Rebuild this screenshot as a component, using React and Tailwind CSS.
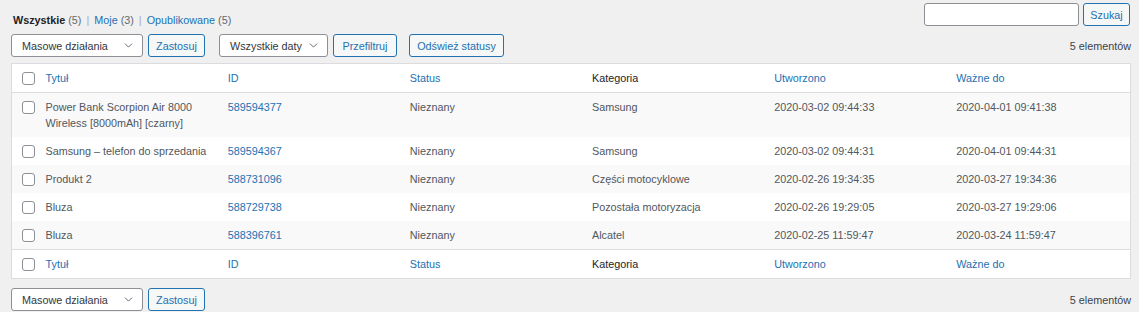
import { ChevronDown } from 'lucide-react'

const rows = [
  {
    title: 'Power Bank Scorpion Air 8000 Wireless [8000mAh] [czarny]',
    id: '589594377',
    status: 'Nieznany',
    cat: 'Samsung',
    created: '2020-03-02 09:44:33',
    valid: '2020-04-01 09:41:38',
  },
  {
    title: 'Samsung – telefon do sprzedania',
    id: '589594367',
    status: 'Nieznany',
    cat: 'Samsung',
    created: '2020-03-02 09:44:31',
    valid: '2020-04-01 09:44:31',
  },
  {
    title: 'Produkt 2',
    id: '588731096',
    status: 'Nieznany',
    cat: 'Części motocyklowe',
    created: '2020-02-26 19:34:35',
    valid: '2020-03-27 19:34:36',
  },
  {
    title: 'Bluza',
    id: '588729738',
    status: 'Nieznany',
    cat: 'Pozostała motoryzacja',
    created: '2020-02-26 19:29:05',
    valid: '2020-03-27 19:29:06',
  },
  {
    title: 'Bluza',
    id: '588396761',
    status: 'Nieznany',
    cat: 'Alcatel',
    created: '2020-02-25 11:59:47',
    valid: '2020-03-24 11:59:47',
  },
]

const Checkbox = () => (
  <span className="block w-[13px] h-[13px] ml-[2px] rounded-[3px] border border-[#8c8f94] bg-white" />
)

const Select = ({ label, width }) => (
  <div
    className={`flex items-center justify-between h-[23px] ${width} pl-[10px] pr-[7px] rounded-[3px] border border-[#8c8f94] bg-white text-[#32373c] whitespace-nowrap`}>
    <span>{label}</span>
    <ChevronDown size={13} strokeWidth={1.6} className="text-[#50575e]" />
  </div>
)

const Button = ({ children, className = '' }) => (
  <button
    className={`h-[23px] px-0 whitespace-nowrap rounded-[3px] border border-[#2271b1] bg-[#f6f7f7] text-[#2271b1] ${className}`}>
    {children}
  </button>
)

const HeadRow = () => (
  <tr className="h-[29px]">
    <td className="pl-[8px] align-middle">
      <Checkbox />
    </td>
    <th className="px-[8px] text-left font-normal text-[#2271b1]">Tytuł</th>
    <th className="px-[8px] text-left font-normal text-[#2271b1]">ID</th>
    <th className="px-[8px] text-left font-normal text-[#2271b1]">Status</th>
    <th className="px-[8px] text-left font-normal text-[#1d2327]">Kategoria</th>
    <th className="px-[8px] text-left font-normal text-[#2271b1]">Utworzono</th>
    <th className="px-[8px] text-left font-normal text-[#2271b1]">Ważne do</th>
  </tr>
)

const Nav = ({ top }) => (
  <div className="flex items-center h-[23px]">
    <Select label="Masowe działania" width="w-[132px]" />
    <Button className="ml-[5px] w-[57px]">Zastosuj</Button>
    {top && (
      <>
        <div className="ml-[14px]">
          <Select label="Wszystkie daty" width="w-[109px]" />
        </div>
        <Button className="ml-[5px] w-[64px]">Przefiltruj</Button>
        <Button className="ml-[12px] w-[95px]">Odśwież statusy</Button>
      </>
    )}
    <div className="ml-auto text-[#3c434a]">5 elementów</div>
  </div>
)

export default function App() {
  return (
    <div
      className="w-[1139px] h-[312px] bg-[#f0f0f1] pl-[11px] pr-[8px] pt-[3px] text-[10.8px] leading-[16px] text-[#50575e]"
      style={{ fontFamily: '"Liberation Sans", Arial, sans-serif' }}>
      <div className="flex justify-between items-start h-[23px]">
        <div className="mt-[9px] ml-[2px] text-[#646970]">
          <span className="font-bold text-[#1d2327]">Wszystkie</span> (5)
          <span className="mx-[5px] text-[#a7aaad]">|</span>
          <span className="text-[#2271b1]">Moje</span> (3)
          <span className="mx-[5px] text-[#a7aaad]">|</span>
          <span className="text-[#2271b1]">Opublikowane</span> (5)
        </div>
        <div className="flex gap-[4px] mr-[1px]">
          <input className="w-[155px] h-[23px] rounded-[3px] border border-[#8c8f94] bg-white" />
          <Button className="w-[47px]">Szukaj</Button>
        </div>
      </div>

      <div className="mt-[8px]">
        <Nav top />
      </div>

      <table className="mt-[6px] w-[1120px] table-fixed border-collapse border border-[#dcdcde] bg-white">
        <colgroup>
          <col className="w-[26px]" />
          <col />
          <col />
          <col />
          <col />
          <col />
          <col />
        </colgroup>
        <thead className="border-b border-[#dcdcde]">
          <HeadRow />
        </thead>
        <tbody>
          {rows.map((r, i) => (
            <tr key={r.id} className={i % 2 === 0 ? 'bg-[#f9f9f9]' : 'bg-white'}>
              <td className="pl-[8px] pt-[8px] align-top">
                <Checkbox />
              </td>
              <td className="px-[8px] py-[6px] align-top">{r.title}</td>
              <td className="px-[8px] py-[6px] align-top text-[#2271b1]">{r.id}</td>
              <td className="px-[8px] py-[6px] align-top">{r.status}</td>
              <td className="px-[8px] py-[6px] align-top">{r.cat}</td>
              <td className="px-[8px] py-[6px] align-top">{r.created}</td>
              <td className="px-[8px] py-[6px] align-top">{r.valid}</td>
            </tr>
          ))}
        </tbody>
        <tfoot className="border-t border-[#dcdcde]">
          <HeadRow />
        </tfoot>
      </table>

      <div className="mt-[9px]">
        <Nav />
      </div>
    </div>
  )
}
